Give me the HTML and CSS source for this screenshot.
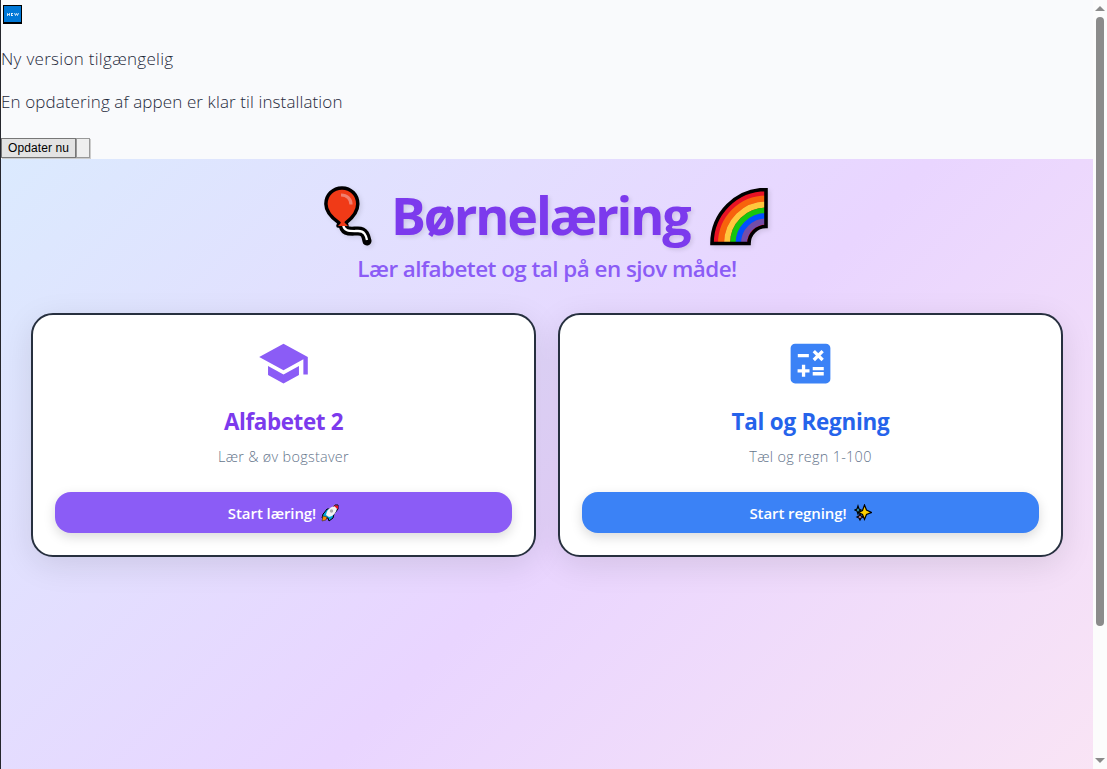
FILE: index.html
```
<!DOCTYPE html>
<html lang="da">
<head>
<meta charset="utf-8">
<title>Børnelæring</title>
<link rel="stylesheet" href="styles.css">
</head>
<body>
<div class="page">
  <div class="content">
    <section class="update">
      <svg class="new-icon" viewBox="0 0 19 19"><path fill="#000" d="M0 0h19v19H0z"/><path fill="#0078d7" d="M1 1h17v16H1z"/><path d="M4.500 11V8.500l2 2V8M8.500 8v3M8 8.500h2M8 10.500h2M11.500 8l1 2.500 1-2 1 2 1-2.500" fill="none" stroke="#fff" stroke-width=".8"/></svg>
      <p class="update-title"><span class="t-new">Ny version tilgængelig</span></p>
      <p class="update-text"><span class="t-info">En opdatering af appen er klar til installation</span></p>
      <div class="actions"><button class="native now">Opdater nu</button><button class="native close" aria-label="Luk"></button></div>
    </section>
    <main class="app">
      <header class="hero">
        <h1 class="title">
          <svg class="balloon" viewBox="0 0 48 60"><path d="M19 37c0 10 7 8 15 8 7 0 8 5 9 10" fill="none" stroke="#000" stroke-width="9" stroke-linecap="round"/><path d="M18 1.900c9 0 15.800 7 15.800 16 0 8-5.500 14-11.800 19l1 3h-9l1-3C8 32 1.900 26 1.900 18 1.900 9 9 1.900 18 1.900z" fill="#f03a17" stroke="#000" stroke-width="3.500" stroke-linejoin="round"/><path d="M19 38c1 8 7 7 15 7 7 0 8 5 9 9" fill="none" stroke="#fff" stroke-width="2.300"/><path d="m14 40 5-5 5 5z" fill="#f03a17"/><path d="M17 9c6 0 10 4 10 9.500" fill="none" stroke="#f08070" stroke-width="3.200"/></svg>
          <span class="name">Børnelæring</span>
          <svg class="rainbow" viewBox="0 0 58 58"><path d="M2 55.500A54 54 0 0 1 56 1.500V38.500A17 17 0 0 0 39 55.500z" fill="#e81224"/><g fill="none" stroke-width="6"><path stroke="#f7630c" d="M11 55.500A45 45 0 0 1 56 10.500"/><path stroke="#ffc83d" d="M17 55.500A39 39 0 0 1 56 16.500"/><path stroke="#16c60c" d="M23 55.500A33 33 0 0 1 56 22.500"/><path stroke="#0050ff" d="M28.500 55.500A27.500 27.500 0 0 1 56 28"/><path stroke="#744da9" d="M34 55.500A22 22 0 0 1 56 33.500"/></g><path d="M2 55.500A54 54 0 0 1 56 1.500V38.500A17 17 0 0 0 39 55.500z" fill="none" stroke="#000" stroke-width="3.600"/></svg>
        </h1>
        <p class="tagline"><span class="t-tag">Lær alfabetet og tal på en sjov måde!</span></p>
      </header>
      <div class="cards">
        <article class="card purple">
          <svg class="icon" viewBox="0 0 24 24"><path d="M5 13.180v4L12 21l7-3.820v-4L12 17l-7-3.820zM12 3 1 9l11 6 9-4.910V17h2V9L12 3z"/></svg>
          <h2 class="heading"><span class="t-alf">Alfabetet 2</span></h2>
          <p class="desc"><span class="t-bog">Lær &amp; øv bogstaver</span></p>
          <a class="start"><span class="t-start1">Start læring!</span><svg class="rocket" viewBox="0 0 18 18"><path d="m3 9 3-4h4L14 1h3v4l-4 5-1 4-4 3-1-3H1l1-4z" fill="#00a4d8" stroke="#000"/><path d="M5 11c1-6 5-9 11-9 0 6-3 10-8 11z" fill="#f4f4f4"/><path d="M12.500 1.500H17v4z" fill="#e81224"/><circle cx="10.500" cy="7" r="1.700" fill="#aaa"/><path d="m2 12 4 1-1 3-4 1z" fill="#ff8c00" stroke="#333" stroke-width=".6"/></svg></a>
        </article>
        <article class="card blue">
          <svg class="icon" viewBox="0 0 24 24"><rect x="3" y="3" width="18" height="18" rx="2"/><path d="M6.250 8.470h5M8.850 12.600v5.400M6.150 15.300h5.400M13 14.350h5M13 16.650h5M13.500 6.400l4 4M17.500 6.400l-4 4" fill="none" stroke="#fff" stroke-width="1.500"/></svg>
          <h2 class="heading"><span class="t-tal">Tal og Regning</span></h2>
          <p class="desc"><span class="t-regn">Tæl og regn 1-100</span></p>
          <a class="start"><span class="t-start2">Start regning!</span><svg class="sparkles" viewBox="0 0 18 18"><g stroke="#000" stroke-width="1.200"><path fill="#ffd000" d="m10.500 1 2 5 5 2.500-5 2-2 5-2-5-4-2 4-2z"/><path fill="#40c8e8" d="m4 2 1 3 2 1-2 1-1 3-1-3-2-1 2-1z"/><path fill="#f49bb8" d="m6 10 1 2 2 1-2 1-1 2-1-2-2-1 2-1z"/></g></svg></a>
        </article>
      </div>
    </main>
  </div>
  <aside class="scrollbar">
    <svg class="arrow" viewBox="0 0 10 5"><path d="M0 5 5 0l5 5z"/></svg>
    <div class="thumb"></div>
    <svg class="arrow down" viewBox="0 0 10 5"><path d="M0 0h10L5 5z"/></svg>
  </aside>
</div>
</body>
</html>
```
FILE: styles.css
```
* { box-sizing: border-box; }
body { margin: 0; overflow: hidden; font-family: "Open Sans", "Noto Sans", sans-serif; color: #1e293b; }
p, h1, h2 { margin: 0; }
svg { display: block; flex: none; }
span { white-space: nowrap; }
.page { display: flex; height: 769px; overflow: hidden; border-left: 1px solid #25262d; }
.content { width: 1092px; flex: none; background: #f9fafc; }
.update { height: 159px; padding-top: 5px; }
.new-icon { width: 19px; height: 19px; margin-left: 2px; }
.update-title, .update-text { height: 24px; line-height: 24px; font-size: 17px; font-weight: 300; }
.update-title { margin-top: 23px; letter-spacing: .3px; }
.update-text { margin-top: 19px; letter-spacing: .11px; }
.actions { display: flex; margin-top: 24px; }
.native { height: 20px; padding: 0; border: 1px solid #777; border-radius: 0; background: #e3e3e3; box-shadow: 1px 1px 0 #ccc; font: 12px/17px "Liberation Sans", sans-serif; letter-spacing: .1px; color: #000; }
.now { width: 75px; }
.close { width: 14px; background: #efefef; border-color: #999; }
.app { height: 769px; padding: 24px 30px; background: linear-gradient(135deg, #dbeafe 0%, #e9d5ff 50%, #fce7f3 100%); }
.hero { height: 130px; }
.title { display: flex; height: 66px; padding-left: 293px; font-size: 52px; line-height: 64px; color: #7c3aed; }
.balloon { width: 48px; height: 60px; margin: 3px 19px 0 0; filter: drop-shadow(2px 2px 2px rgba(0,0,0,.1)); }
.name { width: 299px; letter-spacing: -2.150px; text-shadow: 2px 2px 4px rgba(0,0,0,.1); }
.rainbow { width: 58px; height: 58px; margin: 5px 0 0 20px; filter: drop-shadow(2px 2px 2px rgba(0,0,0,.1)); }
.tagline { height: 36px; margin-top: 2px; text-align: center; font-size: 22.400px; line-height: 36px; font-weight: 600; letter-spacing: -.52px; color: #8b5cf6; }
.cards { display: grid; grid-template-columns: 505px 505px; column-gap: 22px; }
.card { height: 244px; padding: 24px 22px; border: 2px solid #27303f; border-radius: 22px; background: #fff; box-shadow: 0 8px 32px rgba(0,0,0,.1); text-align: center; }
.icon { width: 53px; height: 53px; margin: -2px auto 0; }
.purple .icon { fill: #8b5cf6; }
.blue .icon { fill: #3b82f6; }
.heading { height: 32px; margin-top: 15px; font-size: 22.400px; line-height: 33px; }
.t-alf { letter-spacing: -.36px; }
.t-tal { letter-spacing: -.22px; }
.purple .heading { color: #7c3aed; }
.blue .heading { color: #2563eb; }
.desc { height: 22px; margin-top: 9px; font-size: 14.400px; line-height: 22px; font-weight: 300; letter-spacing: .3px; color: #64748b; }
.start { display: flex; justify-content: center; align-items: center; gap: 5px; height: 41px; margin-top: 24px; border-radius: 16px; box-shadow: 0 4px 12px rgba(0,0,0,.15); font-size: 15px; font-weight: 600; letter-spacing: -.08px; color: #fff; }
.purple .start { background: #8b5cf6; }
.blue .start { background: #3b82f6; }
.rocket, .sparkles { width: 18px; height: 18px; }
.sparkles { margin-left: 2px; }
.scrollbar { display: flex; flex-direction: column; align-items: center; width: 14px; padding: 6px 0; background: #fcfcfc; }
.arrow { width: 10px; height: 5px; fill: #8b8b8b; }
.thumb { width: 8px; height: 609px; margin-top: 6px; border-radius: 4px; background: #8b8b8b; }
.down { margin-top: auto; }
```
